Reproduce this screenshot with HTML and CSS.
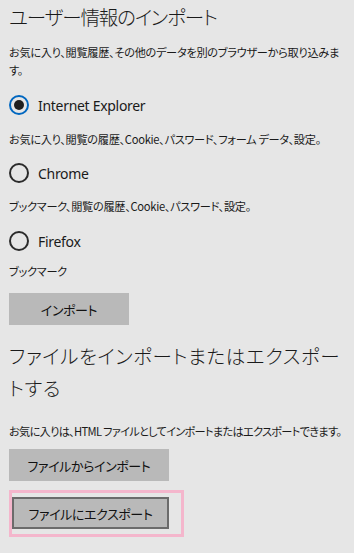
FILE: index.html
```html
<!DOCTYPE html>
<html lang="ja">
<head>
<meta charset="utf-8">
<link rel="stylesheet" href="styles.css">
</head>
<body>
<h1 class="title">ユーザー情報のインポート</h1>
<p class="desc first">お気に入り、閲覧履歴、その他のデータを別のブラウザーから取り込みます。</p>

<label class="radio r-ie"><span class="dot checked"></span><span class="rlabel">Internet Explorer</span></label>
<p class="desc d-ie">お気に入り、閲覧の履歴、Cookie、パスワード、フォーム データ、設定。</p>

<label class="radio r-chrome"><span class="dot"></span><span class="rlabel">Chrome</span></label>
<p class="desc d-chrome">ブックマーク、閲覧の履歴、Cookie、パスワード、設定。</p>

<label class="radio r-ff"><span class="dot"></span><span class="rlabel">Firefox</span></label>
<p class="desc d-ff">ブックマーク</p>

<button class="btn btn-import">インポート</button>

<h2 class="title title2">ファイルをインポートまたはエクスポー<br>トする</h2>
<p class="desc d-file">お気に入りは、HTML ファイルとしてインポートまたはエクスポートできます。</p>

<button class="btn btn-from">ファイルからインポート</button>

<div class="highlight">
  <button class="btn btn-export">ファイルにエクスポート</button>
</div>
</body>
</html>
```

FILE: styles.css
```css
html, body {
  margin: 0;
  padding: 0;
  background: #e6e6e6;
}
body {
  padding: 0 8px 0 9px;
  color: #000;
  font-family: "Noto Sans", "Noto Sans CJK JP", sans-serif;
  font-feature-settings: "palt";
}
.title {
  margin: 3px 0 0;
  font-family: "Noto Sans CJK JP", sans-serif;
  font-size: 19.5px;
  letter-spacing: -1.1px;
  line-height: 28px;
  font-weight: 300;
  color: #1a1a1a;
}
.title2 {
  margin-top: 15px;
  font-size: 19.5px;
  letter-spacing: 0.6px;
  line-height: 32px;
  white-space: nowrap;
}
.desc {
  margin: 0;
  font-family: "Noto Sans CJK JP", sans-serif;
  font-size: 11.2px;
  letter-spacing: -0.3px;
  line-height: 18px;
  color: #1a1a1a;
}
.first { margin-top: 12px; }
.d-ie { margin-top: 15px; }
.d-chrome { margin-top: 14px; }
.d-ff { margin-top: 11px; }
.d-file {
  margin-top: 18px;
  white-space: nowrap;
  letter-spacing: -0.7px;
}

.radio {
  display: flex;
  align-items: center;
  height: 20px;
}
.r-ie { margin-top: 16px; }
.r-chrome { margin-top: 15px; }
.r-ff { margin-top: 16px; }
.dot {
  box-sizing: border-box;
  width: 20px;
  height: 20px;
  border: 2px solid #2b2b2b;
  border-radius: 50%;
  display: flex;
  align-items: center;
  justify-content: center;
  flex: none;
}
.dot.checked {
  border-color: #0067c0;
}
.dot.checked::after {
  content: "";
  width: 10px;
  height: 10px;
  border-radius: 50%;
  background: #1f1f1f;
}
.rlabel {
  margin-left: 9px;
  font-size: 14px;
  letter-spacing: -0.3px;
  color: #1a1a1a;
}
.btn {
  display: block;
  box-sizing: border-box;
  height: 32px;
  border: 0;
  padding: 0;
  background: #b9b9b9;
  color: #111;
  font-family: "Noto Sans CJK JP", sans-serif;
  font-feature-settings: "palt";
  font-size: 13px;
  letter-spacing: -0.4px;
}
.btn-import {
  margin-top: 13px;
  width: 120px;
}
.btn-from {
  margin-top: 9px;
  width: 160px;
}
.highlight {
  display: inline-block;
  margin-top: 9px;
  border: 3px solid #f4b6cc;
  padding: 4px 12px 5px 0;
}
.btn-export {
  width: 157px;
  border: 2px solid #6b6b6b;
}
```
